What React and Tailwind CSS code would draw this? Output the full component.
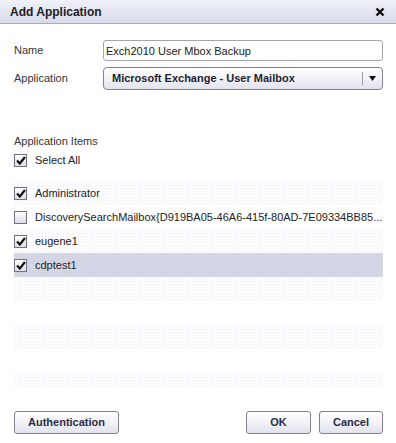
import React, { useState } from 'react';

const items = [
  { name: 'Administrator', checked: true },
  { name: 'DiscoverySearchMailbox{D919BA05-46A6-415f-80AD-7E09334BB85...', checked: false },
  { name: 'eugene1', checked: true },
  { name: 'cdptest1', checked: true, selected: true },
];

// faint dotted stripe used on alternating list rows
const dots = 'bg-[#fdfcfe] bg-[radial-gradient(#f0eaf3_0.8px,transparent_0.9px)] bg-[length:3px_3px]';

const CheckBox = ({ checked }) => (
  <span className="w-[13px] h-[13px] shrink-0 border border-[#707080] bg-gradient-to-b from-white to-[#dcdde6] flex items-center justify-center">
    {checked && (
      <svg width="10" height="9" viewBox="0 0 10 9">
        <path d="M1 4.5 L3.8 7.5 L9 1" fill="none" stroke="#111" strokeWidth="2.2" />
      </svg>
    )}
  </span>
);

const Button = ({ children, className }) => (
  <button className={`h-[23px] rounded-[3px] border border-[#7f818e] bg-gradient-to-b from-white via-[#f2f2f7] to-[#e2e3ec] text-[11px] font-bold text-[#2a2b48] ${className}`}>
    {children}
  </button>
);

const App = () => {
  const [name, setName] = useState('Exch2010 User Mbox Backup');

  const rows = [];
  for (let i = 0; i < 9; i++) {
    const item = items[i];
    const striped = i % 2 === 0;
    rows.push(
      <div
        key={i}
        className={`h-[24px] shrink-0 flex items-center gap-[8px] ${item?.selected ? 'bg-[#d4d6e6]' : striped ? dots : 'bg-white'}`}
      >
        {item && (
          <>
            <CheckBox checked={item.checked} />
            <span className="text-[11px] text-[#222] whitespace-nowrap">{item.name}</span>
          </>
        )}
      </div>
    );
  }

  return (
    <div className="w-[396px] h-[443px] bg-white flex flex-col font-['Liberation_Sans',Arial,sans-serif] text-[#333]">
      <div className="h-[24px] shrink-0 flex items-center justify-between pl-[10px] pr-[11px] bg-gradient-to-b from-[#eff0f8] to-[#d9dbea] border-b border-[#a8aab8]">
        <span className="text-[12px] font-bold text-[#1c1c24]">Add Application</span>
        <svg width="10" height="10" viewBox="0 0 10 10">
          <path d="M1.5 1.5 L8.5 8.5 M8.5 1.5 L1.5 8.5" stroke="#111" strokeWidth="2.4" />
        </svg>
      </div>

      <div className="flex-1 flex flex-col pl-[14px] pr-[13px]">
        <div className="flex items-center mt-[16px]">
          <span className="w-[89px] text-[11px]">Name</span>
          <input
            value={name}
            onChange={(e) => setName(e.target.value)}
            className="flex-1 h-[21px] rounded-[3px] border border-[#a3a5b3] px-[2px] text-[11px] text-[#222] outline-none"
          />
        </div>

        <div className="flex items-center mt-[6px]">
          <span className="w-[89px] text-[11px]">Application</span>
          <div className="flex-1 h-[23px] rounded-[4px] border border-[#7f818e] bg-gradient-to-b from-white via-[#f2f2f7] to-[#e2e3ec] flex items-center">
            <span className="flex-1 pl-[8px] text-[11px] font-bold text-[#1e1f30]">Microsoft Exchange - User Mailbox</span>
            <span className="w-px h-[13px] bg-[#9a9ca8]" />
            <span className="w-[19px] flex justify-center">
              <svg width="7" height="5" viewBox="0 0 7 5"><path d="M0 0 H7 L3.5 5 Z" fill="#111" /></svg>
            </span>
          </div>
        </div>

        <div className="mt-[44px] text-[11px] leading-[14px]">Application Items</div>
        <div className="h-[24px] flex items-center gap-[8px]">
          <CheckBox checked />
          <span className="text-[11px] text-[#222]">Select All</span>
        </div>

        <div className="mt-[9px] h-[207px] flex flex-col overflow-hidden">{rows}</div>

        <div className="mt-[23px] flex items-center">
          <Button className="w-[105px]">Authentication</Button>
          <div className="flex-1" />
          <Button className="w-[65px]">OK</Button>
          <Button className="w-[64px] ml-[8px]">Cancel</Button>
        </div>
      </div>
    </div>
  );
};

export default App;
